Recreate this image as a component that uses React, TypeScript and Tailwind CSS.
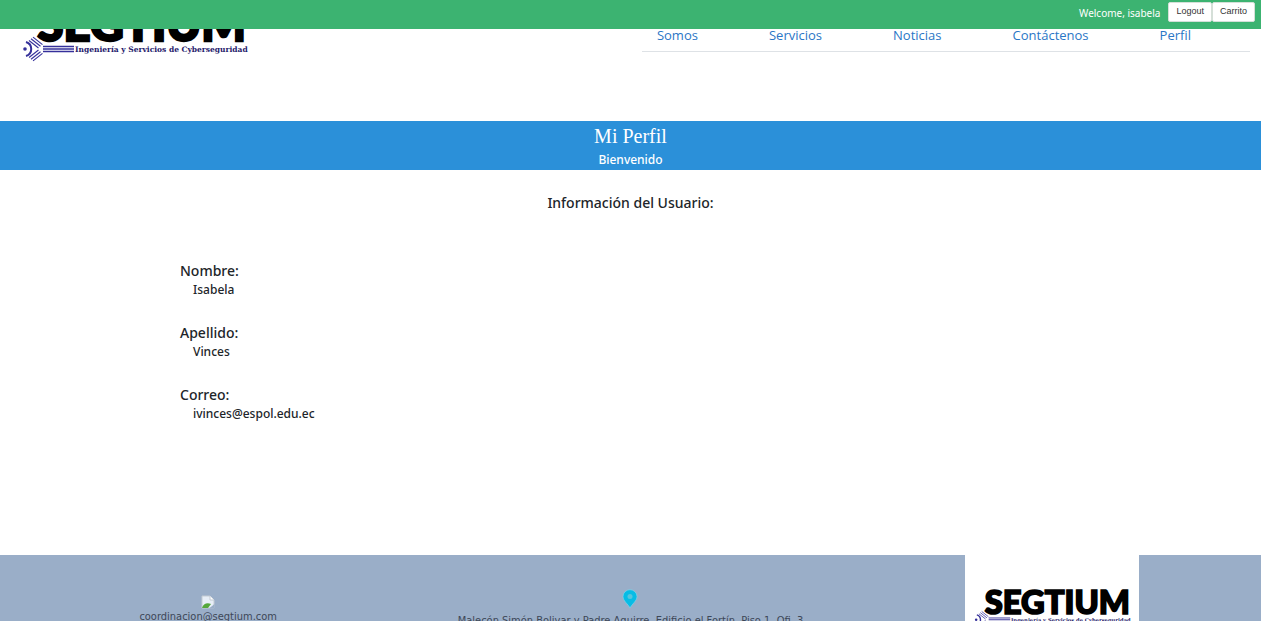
const emblemRays = [0, 2, 4];

function Logo({ className }: { className: string }) {
  return (
    <svg viewBox="0 0 500 260" className={className} role="img" aria-label="Segtium">
      <rect width="500" height="260" fill="#fff" />
      <text
        x="57"
        y="170"
        fontFamily="Lato, sans-serif"
        fontWeight="900"
        fontSize="94"
        fill="#000"
        stroke="#000"
        strokeWidth="5"
      >
        SEGTIUM
      </text>
      <g transform="scale(2)" fill="none" stroke="#35309a" strokeWidth="1.1">
        <path d="M17 86a7.300 7.300 0 0 1 0 14" strokeWidth="2" />
        {emblemRays.map((d) => (
          <g key={d}>
            <path d={`M${20 + d} ${84.5 - d * 0.85}l9.500 7.500`} />
            <path d={`M${20 + d} ${101.5 + d * 0.85}l9.500 -7.500`} />
          </g>
        ))}
        <path d="M34 90.500H65M34 93H65M34 95.500H65" strokeWidth="1.300" />
      </g>
      <circle cx="32" cy="186" r="3.600" fill="#35309a" />
      <text
        x="132"
        y="192"
        fontFamily="'DejaVu Serif', serif"
        fontWeight="700"
        fontSize="15"
        fill="#25206b"
      >
        Ingeniería y Servicios de Cyberseguridad
      </text>
    </svg>
  );
}

function BrokenImage() {
  return (
    <svg viewBox="0 0 14 14" className="h-[14px] w-[14px]" aria-hidden="true">
      <path d="M1 1h8l4 4v8H1z" fill="#e7eef7" stroke="#c4cbd3" />
      <path d="M9 1v4h4" fill="#fff" stroke="#c4cbd3" />
      <path d="M1 13c1-4 5-6 9-4L7 13z" fill="#55a83c" />
      <path d="M8 13.500l5.500-4.500v4.500z" fill="#9aaec8" />
    </svg>
  );
}

function Pin() {
  return (
    <svg viewBox="0 0 16 20" className="h-5 w-4" aria-hidden="true">
      <path
        d="M8 19C6 15 1 12 1 7.500a7 6.800 0 0 1 14 0C15 12 10 15 8 19z"
        fill="#08bce5"
        stroke="#7fd3ea"
        strokeWidth=".7"
      />
      <circle cx="8" cy="7.500" r="2.500" fill="#58c5dc" />
    </svg>
  );
}

const links = ["Somos", "Servicios", "Noticias", "Contáctenos", "Perfil"];

const fields = [
  { label: "Nombre:", value: "Isabela" },
  { label: "Apellido:", value: "Vinces" },
  { label: "Correo:", value: "ivinces@espol.edu.ec" },
];

export default function App() {
  return (
    <div className="flex h-screen flex-col overflow-hidden bg-white font-['Noto_Sans',sans-serif] text-[#212529]">
      <div className="fixed inset-x-0 top-0 z-10 flex h-[29px] items-start justify-end bg-[#3cb371] pr-[6px] pt-[2px]">
        <span className="mr-2 text-[10px] leading-[22px] text-white">Welcome, isabela</span>
        <button className="h-5 rounded-[2px] border border-[#d5dfd8] bg-white px-[7px] font-['Liberation_Sans',sans-serif] text-[9px] text-[#333]">
          Logout
        </button>
        <button className="h-5 rounded-[2px] border border-[#d5dfd8] bg-white px-[7px] font-['Liberation_Sans',sans-serif] text-[9px] text-[#333]">
          Carrito
        </button>
      </div>

      <header className="flex h-[121px] shrink-0 items-start justify-between pl-[9px] pr-[11px]">
        <Logo className="-mt-11 w-[250px] shrink-0" />
        <nav className="flex h-[52px] w-[49%] items-end justify-between border-b border-[#dee2e6] pb-[6px] pl-[15px] pr-[59px] font-['Open_Sans',sans-serif] text-[13px] leading-5 text-[#2a76c6]">
          {links.map((link) => (
            <a key={link} href="#">
              {link}
            </a>
          ))}
        </nav>
      </header>

      <section className="h-[49px] shrink-0 bg-[#2b90d9] text-center text-white">
        <h1 className="font-['Liberation_Serif',serif] text-[20px] leading-[30px]">Mi Perfil</h1>
        <p className="text-[12px] font-medium leading-[18px]">Bienvenido</p>
      </section>

      <main className="h-[385px] shrink-0 pt-[22px]">
        <h2 className="text-center text-[14px] font-medium leading-[22px]">
          Información del Usuario:
        </h2>
        <dl className="mt-[46px] flex flex-col gap-[24px] pl-[180px]">
          {fields.map(({ label, value }) => (
            <div key={label}>
              <dt className="text-[14px] font-medium leading-[22px]">{label}</dt>
              <dd className="pl-[13px] text-[12px] font-medium leading-4">{value}</dd>
            </div>
          ))}
        </dl>
      </main>

      <footer className="grid flex-1 grid-cols-3 overflow-hidden bg-[#9aaec8] font-['DejaVu_Sans_Condensed','Open_Sans',sans-serif] text-[11px] leading-4 text-[#3d4757]">
        <div className="flex flex-col items-center pr-1 pt-10">
          <BrokenImage />
          <a href="mailto:coordinacion@segtium.com">coordinacion@segtium.com</a>
        </div>
        <div className="flex flex-col items-center pt-[34px]">
          <Pin />
          <p className="mt-1 whitespace-nowrap">
            Malecón Simón Bolivar y Padre Aguirre, Edificio el Fortín, Piso 1, Ofi. 3
          </p>
        </div>
        <div className="flex items-start justify-center pl-[2px]">
          <Logo className="w-[174px]" />
        </div>
      </footer>
    </div>
  );
}
